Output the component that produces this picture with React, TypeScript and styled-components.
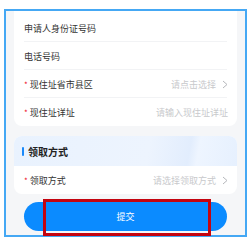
import React from "react";
import styled, { createGlobalStyle } from "styled-components";

const GlobalStyle = createGlobalStyle`
    html, body {
        margin: 0;
        padding: 0;
        background: #ffffff;
        font-family: "Noto Sans CJK SC", "Noto Sans", sans-serif;
    }
`;

const Frame = styled.div`
    position: relative;
    box-sizing: border-box;
    margin: 9px 0 0 4px;
    width: 243px;
    height: 228px;
    border: 2px solid #45a8f4;
    background: #f5f6f8;
    padding: 0 8px 0 8px;
    display: flex;
    flex-direction: column;
`;

const Card = styled.div<{ $top?: number; $flat?: boolean }>`
    background: #ffffff;
    border-radius: ${(p) => (p.$flat ? "0 0 8px 8px" : "8px")};
    padding-top: ${(p) => p.$top ?? 0}px;
    margin-bottom: 10px;
    overflow: hidden;
`;

const Row = styled.div<{ $line?: boolean }>`
    position: relative;
    height: 28px;
    display: flex;
    align-items: center;
    justify-content: space-between;
    padding: 0 9px 0 10px;
    font-size: 9px;
    color: #333333;

    &::after {
        content: "";
        display: ${(p) => (p.$line ? "block" : "none")};
        position: absolute;
        left: 10px;
        right: 10px;
        bottom: 0;
        height: 1px;
        background: #f2f3f5;
    }
`;

const Label = styled.span`
    display: flex;
    align-items: center;
    white-space: nowrap;
`;

const Star = styled.span`
    color: #ee0a24;
    font-size: 8px;
    margin-right: 2px;
`;

const Value = styled.span`
    display: flex;
    align-items: center;
    gap: 6px;
    color: #c8c9cc;
    font-size: 9px;
    white-space: nowrap;
`;

const Header = styled.div`
    height: 30px;
    display: flex;
    align-items: center;
    padding: 0 8px;
    gap: 4px;
    font-size: 10px;
    font-weight: 700;
    color: #222222;
    background: linear-gradient(100deg, #e9f2fe 0%, #edf4fe 60%, #e2edfd 78%, #eef5ff 82%, #e6f0fe 100%);
`;

const Bar = styled.span`
    width: 2px;
    height: 9px;
    border-radius: 1px;
    background: #1989fa;
`;

const Submit = styled.button`
    margin: -2px 10px 0 10px;
    height: 29px;
    border: none;
    border-radius: 15px;
    background: #0b8bff;
    color: #ffffff;
    font-family: inherit;
    font-size: 9px;
`;

const Highlight = styled.div`
    position: absolute;
    left: 37px;
    top: 188px;
    width: 168px;
    height: 37px;
    box-sizing: border-box;
    border: 3px solid #c4040f;
    pointer-events: none;
`;

const Chevron = () => (
    <svg width="6" height="9" viewBox="0 0 6 9">
        <path d="M1 1 L5 4.5 L1 8" fill="none" stroke="#b5b7bb" strokeWidth="1" />
    </svg>
);

export default function App() {
    return (
        <>
            <GlobalStyle />
            <Frame>
                <Card $top={3} $flat>
                    <Row $line>
                        <Label>申请人身份证号码</Label>
                    </Row>
                    <Row $line>
                        <Label>电话号码</Label>
                    </Row>
                    <Row $line>
                        <Label>
                            <Star>*</Star>现住址省市县区
                        </Label>
                        <Value>
                            请点击选择
                            <Chevron />
                        </Value>
                    </Row>
                    <Row>
                        <Label>
                            <Star>*</Star>现住址详址
                        </Label>
                        <Value>请输入现住址详址</Value>
                    </Row>
                </Card>
                <Card>
                    <Header>
                        <Bar />
                        领取方式
                    </Header>
                    <Row>
                        <Label>
                            <Star>*</Star>领取方式
                        </Label>
                        <Value>
                            请选择领取方式
                            <Chevron />
                        </Value>
                    </Row>
                </Card>
                <Submit>提交</Submit>
                <Highlight />
            </Frame>
        </>
    );
}
